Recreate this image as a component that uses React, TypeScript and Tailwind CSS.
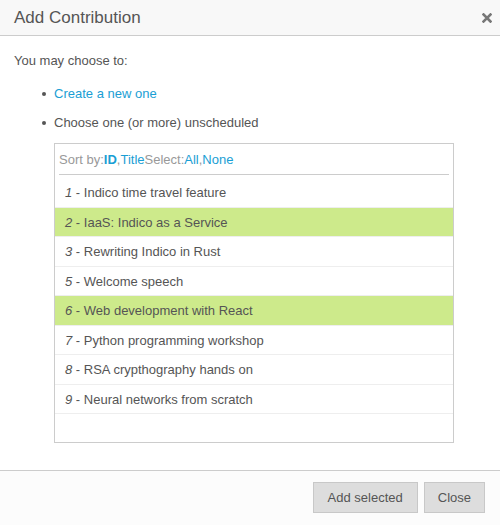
import React from 'react';

interface Contribution {
  id: number;
  title: string;
  selected?: boolean;
}

const contributions: Contribution[] = [
  { id: 1, title: 'Indico time travel feature' },
  { id: 2, title: 'IaaS: Indico as a Service', selected: true },
  { id: 3, title: 'Rewriting Indico in Rust' },
  { id: 5, title: 'Welcome speech' },
  { id: 6, title: 'Web development with React', selected: true },
  { id: 7, title: 'Python programming workshop' },
  { id: 8, title: 'RSA crypthography hands on' },
  { id: 9, title: 'Neural networks from scratch' },
];

export default function App() {
  return (
    <div className="w-[500px] h-[525px] bg-white flex flex-col text-[13px] text-[#555] font-['Liberation_Sans',Arial,sans-serif]">
      {/* header */}
      <div className="h-[36px] shrink-0 bg-[#f8f8f8] border-b border-[#ccc] flex items-center justify-between pl-[14px] pr-[8px]">
        <span className="text-[17px] text-[#555]">Add Contribution</span>
        <svg width="10" height="10" viewBox="0 0 10 10" className="mt-[1px]">
          <path d="M1.5 1.5 L8.5 8.5 M8.5 1.5 L1.5 8.5" stroke="#777" strokeWidth="2.6" strokeLinecap="square" />
        </svg>
      </div>

      {/* body */}
      <div className="flex-1 px-[14px] pt-[17px]">
        <p className="leading-[16px]">You may choose to:</p>
        <ul className="mt-[17px] pl-[28px] flex flex-col gap-[13px]">
          <li className="flex items-center gap-[8px] leading-[16px]">
            <span className="w-[4px] h-[4px] rounded-full bg-[#555]" />
            <a className="text-[#1a9ed4] cursor-pointer">Create a new one</a>
          </li>
          <li className="flex items-center gap-[8px] leading-[16px]">
            <span className="w-[4px] h-[4px] rounded-full bg-[#555]" />
            <span>Choose one (or more) unscheduled</span>
          </li>
        </ul>

        <div className="ml-[40px] mt-[12px] w-[400px] h-[300px] border border-[#ccc] flex flex-col">
          <div className="mx-[4px] h-[31px] border-b border-[#ccc] flex items-center pt-[2px] text-[#999]">
            <span>Sort by:</span>
            <span className="text-[#1a9ed4] font-bold">ID</span>
            <span>,</span>
            <span className="text-[#1a9ed4]">Title</span>
            <span>Select:</span>
            <span className="text-[#1a9ed4]">All</span>
            <span>,</span>
            <span className="text-[#1a9ed4]">None</span>
          </div>
          <div className="mt-[3px] flex flex-col">
            {contributions.map((c) => (
              <div
                key={c.id}
                className={`h-[29.5px] border-b border-[#eee] flex items-center pl-[10px] pt-[1px] ${c.selected ? 'bg-[#cdea8b]' : ''}`}
              >
                <span className="italic">{c.id}</span>
                <span>&nbsp;- {c.title}</span>
              </div>
            ))}
          </div>
        </div>
      </div>

      {/* footer */}
      <div className="h-[55px] shrink-0 bg-[#fcfcfc] border-t border-[#ccc] flex items-start justify-end gap-[6px] pt-[11px] pr-[15px]">
        <button className="h-[31px] px-[14px] bg-[#ddd] border border-[#c8c8c8] text-[#555] text-[13px]">Add selected</button>
        <button className="h-[31px] px-[13px] bg-[#ddd] border border-[#c8c8c8] text-[#555] text-[13px]">Close</button>
      </div>
    </div>
  );
}
